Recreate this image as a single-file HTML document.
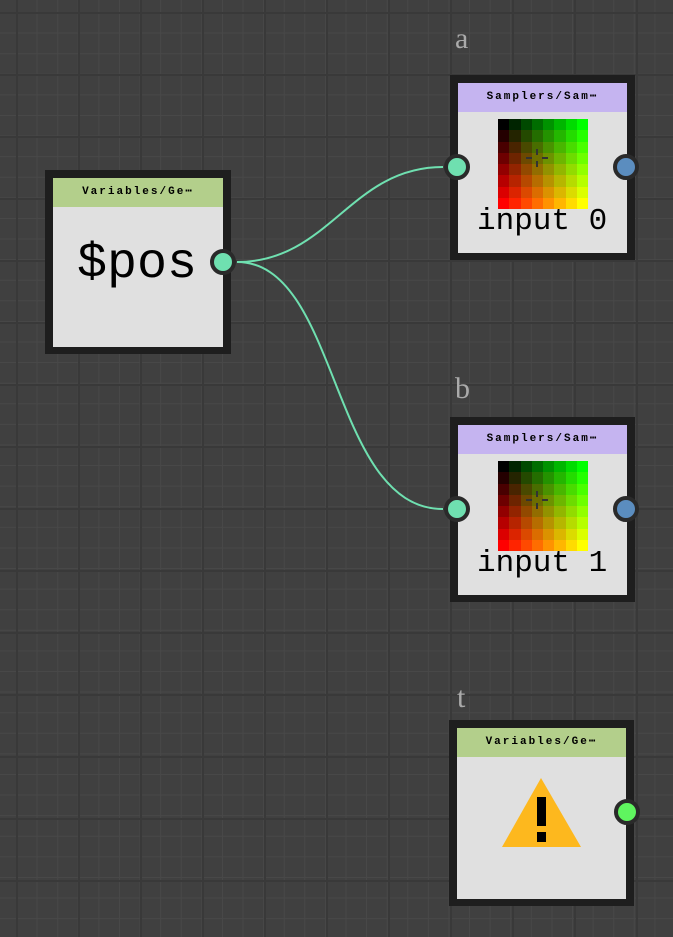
<!DOCTYPE html>
<html><head><style>
body{margin:0;width:673px;height:937px;overflow:hidden;background:#404040;position:relative;font-family:"Liberation Serif","Noto Serif CJK SC",serif}
.grid{position:absolute;inset:0;background-image:
linear-gradient(#393939 2px,transparent 2px),linear-gradient(90deg,#393939 2px,transparent 2px),
linear-gradient(#484848 1px,transparent 1px),linear-gradient(90deg,#484848 1px,transparent 1px);
background-size:62px 62px,62px 62px,20.6px 20.6px,20.6px 20.6px;
background-position:0 12px,16px 0,0 12px,16px 0}
.node{position:absolute;background:#1e1e1e}
.in{position:absolute;left:8px;top:8px;right:8px;bottom:7px;background:#e0e0e0}
.hd{height:29px;font:bold 11px "Liberation Mono",monospace;letter-spacing:2px;text-align:center;line-height:29px;color:#000}
.lab{position:absolute;color:#aaa;font-size:30px}
.port{position:absolute;width:18px;height:18px;border-radius:50%;border:4px solid #2a2a2a}
.img{position:absolute;left:40px;top:36px;width:90px;height:90px;display:grid;grid-template-columns:repeat(8,1fr)}
.it{position:absolute;left:19px;top:123px;font:31px/1 "Liberation Mono",monospace;color:#000;white-space:pre}
</style></head><body><div class="grid"></div>
<svg style="position:absolute;left:0;top:0" width="673" height="937"><path d="M237 262 C330 262 350 167 443 167" stroke="#6fe0b0" stroke-width="2" fill="none"/><path d="M237 262 C340 262 330 509 443 509" stroke="#6fe0b0" stroke-width="2" fill="none"/></svg>
<div class="lab" style="left:455px;top:22px">a</div>
<div class="lab" style="left:455px;top:372px">b</div>
<div class="lab" style="left:457px;top:681px">t</div>

<div class="node" style="left:45px;top:170px;width:186px;height:184px"><div class="in"><div class="hd" style="background:#b3cf8b">Variables/Ge⋯</div><div style="position:absolute;left:24px;top:62px;font:50px/1 'Liberation Mono',monospace">$pos</div></div></div>
<div class="port" style="left:210px;top:249px;background:#6fe0b0"></div>

<div class="node" style="left:450px;top:75px;width:185px;height:185px"><div class="in"><div class="hd" style="background:#c5b4f0">Samplers/Sam⋯</div><div class="img" id="g1"></div><div class="it">input 0</div></div></div>
<div class="port" style="left:444px;top:154px;background:#6fe0b0"></div>
<div class="port" style="left:613px;top:154px;background:#5b8dbf"></div>

<div class="node" style="left:450px;top:417px;width:185px;height:185px"><div class="in"><div class="hd" style="background:#c5b4f0">Samplers/Sam⋯</div><div class="img" id="g2"></div><div class="it">input 1</div></div></div>
<div class="port" style="left:444px;top:496px;background:#6fe0b0"></div>
<div class="port" style="left:613px;top:496px;background:#5b8dbf"></div>

<div class="node" style="left:449px;top:720px;width:185px;height:186px"><div class="in"><div class="hd" style="background:#b3cf8b">Variables/Ge⋯</div>
<svg style="position:absolute;left:0;top:0" width="170" height="170"><polygon points="84,50 45,119 124,119" fill="#fdb81e"/><rect x="80" y="69" width="9" height="29" fill="#000"/><rect x="80" y="104" width="9" height="10" fill="#000"/></svg></div></div>
<div class="port" style="left:614px;top:799px;background:#5ff55f"></div>
<script>
for(const id of ["g1","g2"]){const g=document.getElementById(id);for(let r=0;r<8;r++)for(let c=0;c<8;c++){const d=document.createElement("div");d.style.background=`rgb(${Math.round(r*255/7)},${Math.round(c*255/7)},0)`;g.appendChild(d);}
const s=document.createElementNS("http://www.w3.org/2000/svg","svg");s.setAttribute("width","90");s.setAttribute("height","90");s.style.cssText="position:absolute;left:0;top:0";s.innerHTML='<path d="M39 30v6M39 42v6M28 39h6M44 39h6" stroke="#333" stroke-width="2"/>';g.appendChild(s);}
</script>
</body></html>
